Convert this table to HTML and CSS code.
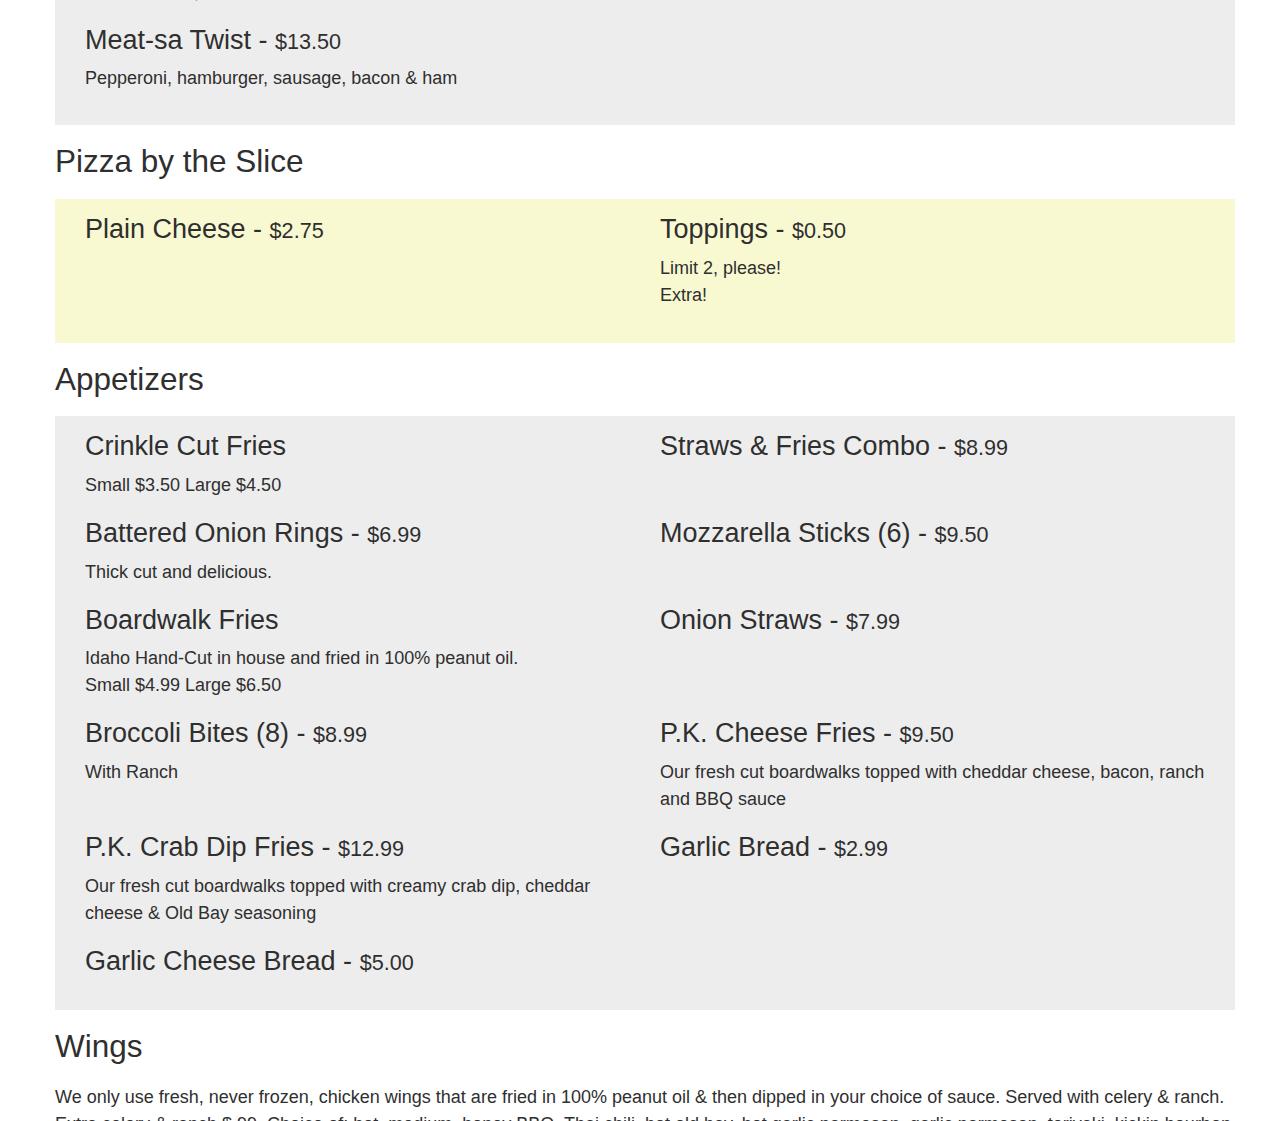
FILE: index.html
```html
<!DOCTYPE html>
<html lang="en">
<head>
<meta charset="utf-8">
<title>Menu</title>
<link rel="stylesheet" href="styles.css">
</head>
<body>
<main class="menu">
  <section class="box gray box-top">
    <div class="item">
      <h3>Ham &amp; Bacon <span class="price">- $13.50</span></h3>
      <p>Ham &amp; bacon, onions &amp; mushrooms</p>
    </div>
    <div class="item"></div>
    <div class="item">
      <h3>Meat-sa Twist - <span class="price">$13.50</span></h3>
      <p>Pepperoni, hamburger, sausage, bacon &amp; ham</p>
    </div>
  </section>

  <h2>Pizza by the Slice</h2>
  <section class="box yellow">
    <div class="item">
      <h3>Plain Cheese - <span class="price">$2.75</span></h3>
    </div>
    <div class="item">
      <h3>Toppings - <span class="price">$0.50</span></h3>
      <p>Limit 2, please!<br>Extra!</p>
    </div>
  </section>

  <h2>Appetizers</h2>
  <section class="box gray">
    <div class="item">
      <h3>Crinkle Cut Fries</h3>
      <p>Small $3.50 Large $4.50</p>
    </div>
    <div class="item">
      <h3>Straws &amp; Fries Combo - <span class="price">$8.99</span></h3>
    </div>
    <div class="item">
      <h3>Battered Onion Rings - <span class="price">$6.99</span></h3>
      <p>Thick cut and delicious.</p>
    </div>
    <div class="item">
      <h3>Mozzarella Sticks (6) - <span class="price">$9.50</span></h3>
    </div>
    <div class="item">
      <h3>Boardwalk Fries</h3>
      <p>Idaho Hand-Cut in house and fried in 100% peanut oil.<br>Small $4.99 Large $6.50</p>
    </div>
    <div class="item">
      <h3>Onion Straws - <span class="price">$7.99</span></h3>
    </div>
    <div class="item">
      <h3>Broccoli Bites (8) - <span class="price">$8.99</span></h3>
      <p>With Ranch</p>
    </div>
    <div class="item">
      <h3>P.K. Cheese Fries - <span class="price">$9.50</span></h3>
      <p>Our fresh cut boardwalks topped with cheddar cheese, bacon, ranch and BBQ sauce</p>
    </div>
    <div class="item">
      <h3>P.K. Crab Dip Fries - <span class="price">$12.99</span></h3>
      <p>Our fresh cut boardwalks topped with creamy crab dip, cheddar cheese &amp; Old Bay seasoning</p>
    </div>
    <div class="item">
      <h3>Garlic Bread - <span class="price">$2.99</span></h3>
    </div>
    <div class="item">
      <h3>Garlic Cheese Bread - <span class="price">$5.00</span></h3>
    </div>
  </section>

  <h2>Wings</h2>
  <p class="intro">We only use fresh, never frozen, chicken wings that are fried in 100% peanut oil &amp; then dipped in your choice of sauce. Served with celery &amp; ranch. Extra celery &amp; ranch $.99. Choice of: hot, medium, honey BBQ, Thai chili, hot old bay, hot garlic parmesan, garlic parmesan, teriyaki, kickin bourbon or plain.</p>
</main>
</body>
</html>
```

FILE: styles.css
```css
html, body {
  margin: 0;
  padding: 0;
  background: #ffffff;
}

body {
  font-family: "Liberation Sans", Arial, sans-serif;
  font-size: 18px;
  line-height: 1.5;
  color: #2f2f2f;
}

.menu {
  width: 1180px;
  margin: -78px 0 0 55px;
}

h2 {
  font-size: 31.5px;
  font-weight: normal;
  line-height: 1.1;
  margin: 19px 0 20px;
}

.box {
  display: grid;
  grid-template-columns: 545px 545px;
  column-gap: 30px;
  row-gap: 20px;
  align-items: start;
  padding: 16px 30px 34px 30px;
}

.box-top {
  padding-top: 17px;
  padding-bottom: 33px;
}

.gray {
  background: #ededed;
}

.yellow {
  background: #f8f9d1;
}

.item h3 {
  font-size: 27px;
  font-weight: normal;
  line-height: 1.1;
  margin: 0;
}

.price {
  font-size: 0.8em;
}

.item p {
  margin: 10px 0 0;
}

.intro {
  margin: 0;
}
```
